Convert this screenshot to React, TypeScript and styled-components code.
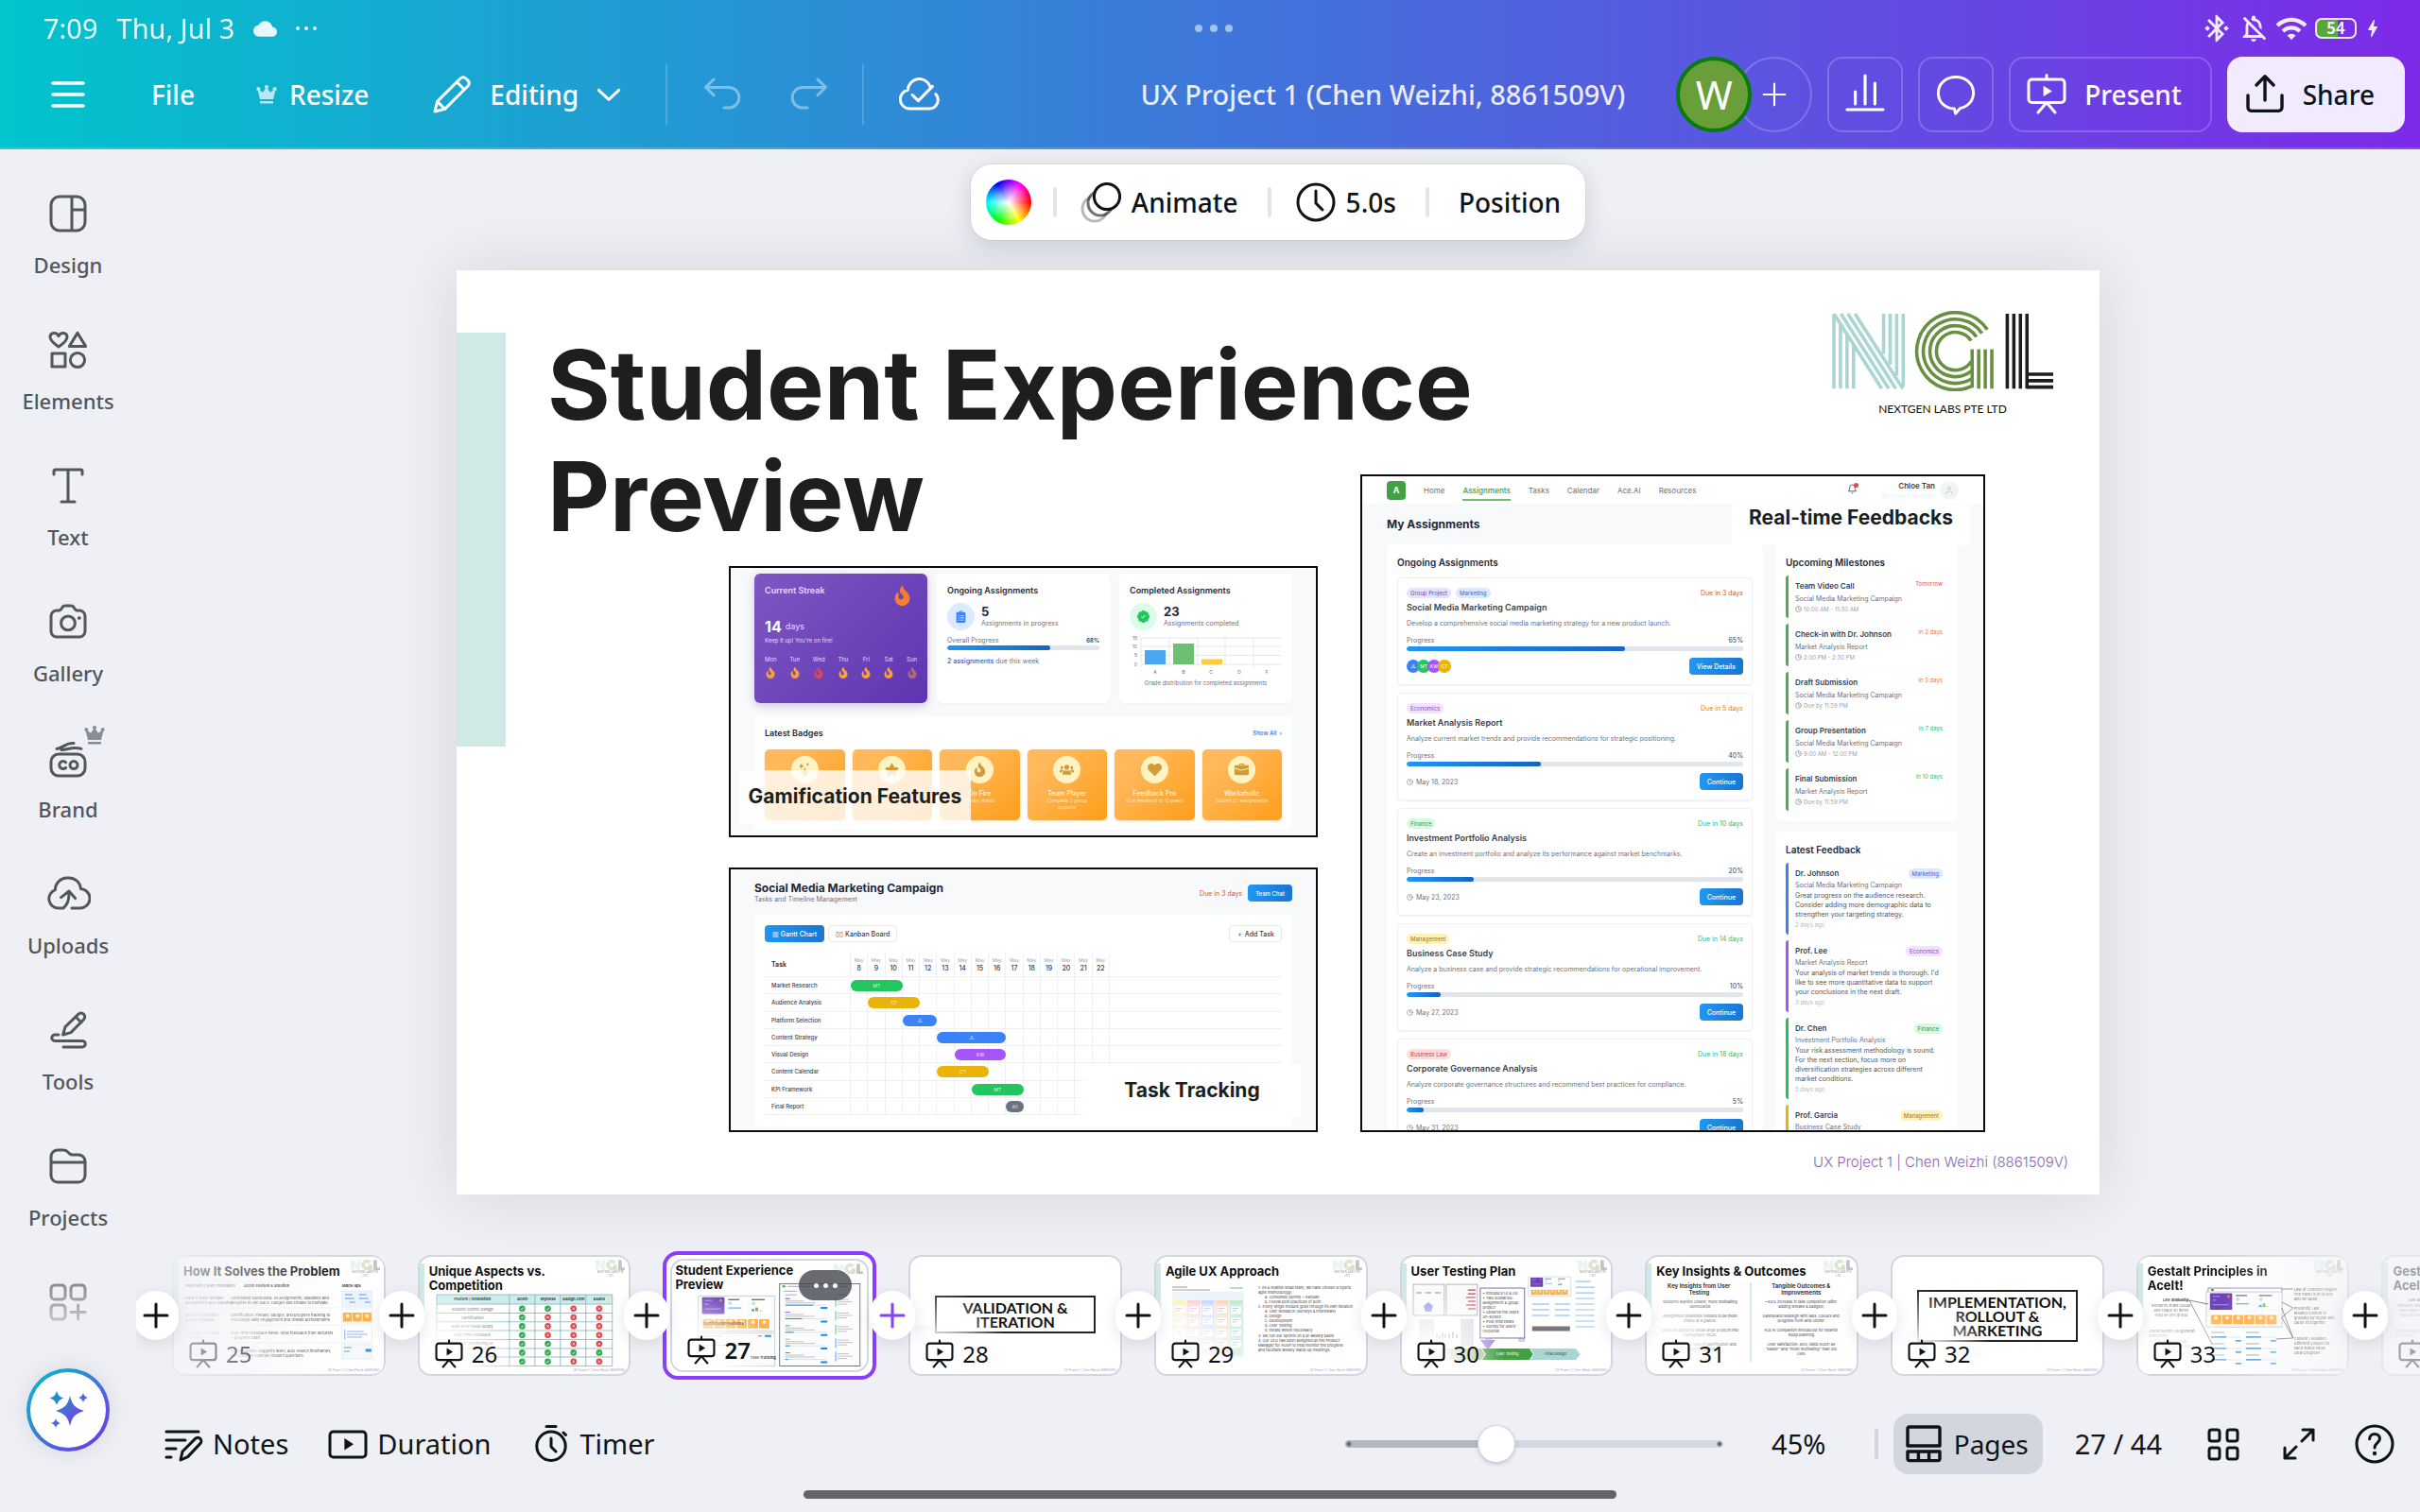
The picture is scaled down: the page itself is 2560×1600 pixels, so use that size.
import React, { useState } from "react";
import styled, { createGlobalStyle, css } from "styled-components";
import { MdBluetoothConnected, MdBolt, MdCloud, MdOutlineNotificationsOff, MdWifi } from "react-icons/md";
import { FaClipboardList, FaFire, FaHeart, FaStar, FaUsers } from "react-icons/fa";
import { BsBriefcaseFill, BsPatchCheckFill, BsStars } from "react-icons/bs";
import { FiBell, FiClock, FiUser } from "react-icons/fi";

const ui = `"Noto Sans", "Open Sans", sans-serif`;
const deck = `Inter, "Noto Sans", sans-serif`;

const GlobalStyle = createGlobalStyle`
  *, *::before, *::after { box-sizing: border-box; }
  body { margin: 0; background: #eff0f5; color: #0e1318; font-family: ${ui}; }
  button { font: inherit; color: inherit; background: none; border: 0; padding: 0; cursor: pointer; }
  h1, h2, h3, h4, p, ul, ol { margin: 0; padding: 0; }
`;

/* ---------- icons ---------- */

const Svg = styled.svg<{ $size?: number }>`
  width: ${(p) => p.$size ?? 48}px;
  height: ${(p) => p.$size ?? 48}px;
  flex: none;
  display: block;
  fill: none;
  stroke: currentColor;
  stroke-width: 1.5;
  stroke-linecap: round;
  stroke-linejoin: round;
`;

type IconName = keyof typeof shapes;

const shapes = {
  menu: <path strokeWidth="1.8" d="M4 6h16M4 12h16M4 18h16" />,
  crown: (
    <path
      fill="currentColor"
      stroke="none"
      d="M12 2a2 2 0 0 1 1.2 3.6l2.6 4.2 3.3-2.3a2 2 0 1 1 2.1.6L19 17H5L2.8 8.1a2 2 0 1 1 2.1-.6l3.3 2.3 2.6-4.2A2 2 0 0 1 12 2ZM5 19h14v2.5H5Z"
    />
  ),
  pencil: <path d="M3 21l1.3-5.3L16.6 3.4a1.9 1.9 0 0 1 2.7 0l1.3 1.3a1.9 1.9 0 0 1 0 2.7L8.3 19.7 3 21ZM14.600 5.400l4 4M4.300 15.700l4 4" />,
  chevron: <path strokeWidth="2.2" d="M4 8.500l8 7.500 8-7.500" />,
  undo: <path d="M7.500 4 3.300 8.200l4.200 4.200M3.600 8.200h11.900a5.400 5.400 0 0 1 0 10.800H13" />,
  redo: <path d="M16.500 4l4.200 4.200-4.200 4.200M20.400 8.200H8.500a5.400 5.400 0 0 0 0 10.800H11" />,
  cloudCheck: (
    <path d="M17.800 7.600a6 6 0 0 0-11.600 2A5 5 0 0 0 7 19.500h10.500a4.600 4.600 0 0 0 3.400-7.700M8.500 12.200l3.200 3.100 7.500-7.600" />
  ),
  plus: <path d="M12 4v16M4 12h16" />,
  chart: <path d="M2.500 20h19M6.800 17v-6.500M12 17V2M17.200 17V6" strokeWidth="1.600" />,
  comment: <path d="M12 2.800c5 0 9.300 3.300 9.300 8.300 0 4-2.600 7.200-7 8.200l-2.500 2.800-.6-2.600C6 19.300 2.700 15.900 2.700 11.100c0-5 4.300-8.300 9.300-8.300Z" />,
  present: (
    <>
      <path d="M4.300 4h15.400a1.800 1.800 0 0 1 1.800 1.800v8.700a1.800 1.800 0 0 1-1.800 1.800H4.300a1.800 1.800 0 0 1-1.800-1.800V5.800A1.800 1.800 0 0 1 4.300 4ZM12 1.800V4M12 16.300l-4.500 5.200M12 16.300l4.500 5.200" />
      <path d="M10.300 7.400v5.600l4.600-2.800Z" fill="currentColor" stroke="none" />
    </>
  ),
  share: <path strokeWidth="1.700" d="M3 12.500v6.200a2 2 0 0 0 2 2h14a2 2 0 0 0 2-2v-6.200M12 15V2.500M7.500 7 12 2.400 16.500 7" />,
  animate: (
    <>
      <circle cx="8.500" cy="15.500" r="6.500" opacity=".3" />
      <circle cx="11.500" cy="12.500" r="6.500" fill="#fff" opacity=".6" />
      <circle cx="15" cy="9" r="6.800" fill="#fff" />
    </>
  ),
  clock: <path d="M12 2.500a9.500 9.500 0 1 1 0 19 9.500 9.500 0 0 1 0-19ZM12 6v6.500l3.500 3.500" />,
  design: <path d="M7.500 3h9A4.500 4.500 0 0 1 21 7.500v9a4.500 4.500 0 0 1-4.500 4.500h-9A4.500 4.500 0 0 1 3 16.500v-9A4.500 4.500 0 0 1 7.500 3ZM14 3v18M14 10h7" />,
  elements: (
    <>
      <path d="M7.500 10.500C4.500 8.500 3 7 3 5.300 3 3 6.300 2.300 7.500 4.800 8.700 2.300 12 3 12 5.300c0 1.700-1.500 3.200-4.500 5.200Z" transform="translate(-.5)" />
      <path d="M17 3.200 21.300 10.200H12.700ZM3.500 14h7v7h-7Z" />
      <circle cx="17" cy="17.500" r="3.800" />
    </>
  ),
  text: <path d="M4.500 6V4.200c0-.5.300-.7.800-.7h13.400c.5 0 .8.200.8.700V6M12 3.500v17M8.500 20.500h7" />,
  camera: (
    <>
      <path d="M3 9a3 3 0 0 1 3-3h1.200c.8 0 1.100-.5 1.600-1.300C9.100 4 9.700 3.500 10.500 3.500h3c.8 0 1.400.5 1.700 1.200.5.800.8 1.300 1.600 1.300H18a3 3 0 0 1 3 3v8a3 3 0 0 1-3 3H6a3 3 0 0 1-3-3Z" />
      <circle cx="12" cy="12.700" r="3.700" />
      <path d="M17.800 10h.2" strokeWidth="1.800" />
    </>
  ),
  brand: (
    <>
      <path d="M7 10h10a4 4 0 0 1 4 4v3.500a4 4 0 0 1-4 4H7a4 4 0 0 1-4-4V14a4 4 0 0 1 4-4ZM6 7.200C10 6.700 11 3.600 15 4.300M8.500 7.800c3.500 0 5.500-2 10.500-.600" />
      <path d="M10.800 14.400a2 2 0 1 0 0 2.800" />
      <circle cx="15" cy="15.800" r="2" />
    </>
  ),
  upload: (
    <path d="M9.500 19.500H6.800a5 5 0 0 1-1.600-9.700A6.300 6.300 0 0 1 12 3.500a6.300 6.300 0 0 1 6.700 5.700 5 5 0 0 1-.7 10.300h-4M8.300 13.800l4.200-3.300 3.300 3.800M12.400 10.800c.3 3.500-.4 6.700-2.900 8.700" />
  ),
  tools: (
    <>
      <path d="M9.300 14.500l1.200-4.200 7-6.700a2 2 0 0 1 2.800 0 2 2 0 0 1 0 2.800l-6.800 6.900ZM16 5l3 3" />
      <path d="M7 14.500H5a1.600 1.600 0 0 0 0 3.200h14.500a1.600 1.600 0 0 1 0 3.300H9.500" />
    </>
  ),
  folder: (
    <path d="M3 7a3.500 3.500 0 0 1 3.500-3.500h3.200c1 0 1.700.4 2.300 1.100l.7.700c.5.500 1 .7 1.800.7h3A3.500 3.500 0 0 1 21 9.500V17a3.500 3.500 0 0 1-3.500 3.500h-11A3.500 3.500 0 0 1 3 17ZM3 10h18" />
  ),
  apps: (
    <path d="M5 3h4a2 2 0 0 1 1.500 2v4A2 2 0 0 1 9 10.500H5A2 2 0 0 1 3 9V5a2 2 0 0 1 2-2ZM15.500 3h4A2 2 0 0 1 21 5v4a2 2 0 0 1-1.500 1.500h-4A2 2 0 0 1 13.500 9V5a2 2 0 0 1 2-2ZM5 13.500h4a2 2 0 0 1 1.500 1.500v4A2 2 0 0 1 9 21H5a2 2 0 0 1-2-2v-4a2 2 0 0 1 2-1.500ZM17.300 13.500V21M13.500 17.300H21" />
  ),
  notes: (
    <>
      <path d="M3 5.500h17M3 10h10M3 14.500h5M3 19h2.500" />
      <path d="M10.500 20.500l1-4.500 6.800-6.800a1.800 1.800 0 0 1 2.600 2.600L14.300 18.800Z" />
    </>
  ),
  duration: (
    <>
      <rect x="2.500" y="5.500" width="19" height="13.500" rx="1.800" />
      <path d="M10.200 9v6.200l4.800-3.100Z" fill="currentColor" stroke="none" />
    </>
  ),
  timer: <path d="M12 5.500a7.600 7.600 0 1 1 0 15.200 7.600 7.600 0 0 1 0-15.200ZM12 9v4.500l2.500 2.500M9.500 2.800h5M18.500 6l1.200 1.200" />,
  pages: <path d="M4.500 3h15a1 1 0 0 1 1 1v9h-17V4a1 1 0 0 1 1-1ZM3.500 16h17v3.800a1 1 0 0 1-1 1h-15a1 1 0 0 1-1-1ZM9.200 16v4.800M14.800 16v4.800" strokeWidth="1.700" />,
  grid: (
    <>
      <rect x="4.500" y="4.500" width="5.500" height="6" rx="1.200" />
      <rect x="14" y="4.500" width="5.500" height="6" rx="1.200" />
      <rect x="4.500" y="14" width="5.500" height="6" rx="1.200" />
      <rect x="14" y="14" width="5.500" height="6" rx="1.200" />
    </>
  ),
  expand: <path d="M14 4.500h5.500V10M19.500 4.500l-6 6M10 19.500H4.500V14M4.500 19.500l6-6" />,
  help: (
    <>
      <circle cx="12" cy="12" r="9.500" />
      <path d="M9.300 9.400c0-3.600 5.400-3.500 5.400-.2 0 2.200-2.700 2.300-2.700 4.800" />
      <path d="M12 17h.01" strokeWidth="2.200" />
    </>
  ),
};

const Icon = ({ name, size }: { name: IconName; size?: number }) => (
  <Svg viewBox="0 0 24 24" $size={size} aria-hidden="true">
    {shapes[name]}
  </Svg>
);

/* ---------- header ---------- */

const Header = styled.header`
  background: linear-gradient(90deg, #00c4cc, #7d2ae8);
  border-bottom: 2px solid rgba(255, 255, 255, 0.16);
  background-clip: border-box;
  background-origin: border-box;
  color: #fff;
`;

const StatusBar = styled.div`
  display: grid;
  grid-template-columns: 1fr auto 1fr;
  align-items: center;
  height: 60px;
  padding: 0 38px 0 46px;
  font: 400 29px/36px ${ui};
  opacity: 0.9;
`;

const StatusGroup = styled.div<{ $end?: boolean; $gap: number }>`
  display: flex;
  align-items: center;
  gap: ${(p) => p.$gap}px;
  justify-content: ${(p) => (p.$end ? "flex-end" : "flex-start")};
`;

const Dots = styled.span<{ $size: number; $gap: number; $color?: string }>`
  display: flex;
  gap: ${(p) => p.$gap}px;
  &::before,
  &::after,
  i {
    content: "";
    width: ${(p) => p.$size}px;
    height: ${(p) => p.$size}px;
    border-radius: 50%;
    background: ${(p) => p.$color ?? "#fff"};
  }
`;

const Battery = styled.span`
  width: 44px;
  height: 22px;
  margin-left: 2px;
  border: 2px solid #fff;
  border-radius: 7px;
  background: linear-gradient(90deg, #52b627 54%, transparent 54%);
  font: 700 17px/18px ${ui};
  text-align: center;
`;

const Toolbar = styled.nav`
  display: flex;
  align-items: center;
  height: 96px;
  padding: 0 16px 16px 48px;
  font: 500 28px/40px ${ui};
`;

const MenuButton = styled.button`
  margin-right: 32px;
`;

const NavButton = styled.button<{ $gap?: number }>`
  display: flex;
  align-items: center;
  gap: ${(p) => p.$gap ?? 12}px;
  height: 80px;
  padding: 0 32px;
`;

const Faded = styled.span<{ $opacity: number }>`
  opacity: ${(p) => p.$opacity};
`;

const Rule = styled.span`
  width: 2px;
  height: 64px;
  margin: 0 34px 0 12px;
  background: rgba(255, 255, 255, 0.18);
`;

const History = styled.div`
  display: flex;
  gap: 44px;
  margin-right: 20px;
  opacity: 0.4;
`;

const DocTitle = styled.h1`
  margin-left: auto;
  font: 500 29px/40px ${ui};
  color: rgba(255, 255, 255, 0.88);
`;

const Actions = styled.div`
  display: flex;
  gap: 16px;
  margin-left: 54px;
`;

const People = styled.div`
  display: flex;
`;

const Avatar = styled.button`
  position: relative;
  width: 80px;
  height: 80px;
  border: 4px solid #0a7a0c;
  border-radius: 50%;
  background: #689f38;
  font: 400 42px/72px ${ui};
`;

const OutlineButton = styled.button<{ $round?: boolean; $wide?: boolean }>`
  display: flex;
  align-items: center;
  justify-content: center;
  gap: 16px;
  min-width: 80px;
  height: 80px;
  padding: ${(p) => (p.$wide ? "0 30px 0 14px" : "0")};
  margin-left: ${(p) => (p.$round ? "-16px" : "0")};
  border: 2px solid rgba(255, 255, 255, 0.2);
  border-radius: ${(p) => (p.$round ? "50%" : "16px")};
`;

const ShareButton = styled.button`
  display: flex;
  align-items: center;
  gap: 16px;
  height: 80px;
  padding: 0 32px 0 16px;
  border-radius: 16px;
  background: #f2ebfe;
  color: #0e1318;
`;

/* ---------- body ---------- */

const Body = styled.div`
  display: grid;
  grid-template-columns: 144px minmax(0, 1fr);
`;

const Sidebar = styled.aside`
  display: flex;
  flex-direction: column;
  align-items: center;
  gap: 48px;
  padding-top: 44px;
  color: #53565b;
`;

const SideButton = styled.button<{ $fade?: boolean }>`
  position: relative;
  display: flex;
  flex-direction: column;
  align-items: center;
  gap: 14px;
  width: 144px;
  padding-bottom: ${(p) => (p.$fade ? 0 : 2)}px;
  font: 500 22px/32px ${ui};
  ${(p) =>
    p.$fade &&
    css`
      margin-bottom: -2px;
      -webkit-mask-image: linear-gradient(rgba(0, 0, 0, 0.7), rgba(0, 0, 0, 0.25));
      mask-image: linear-gradient(rgba(0, 0, 0, 0.7), rgba(0, 0, 0, 0.25));
    `}
`;

const ProMark = styled.span`
  position: absolute;
  top: -12px;
  left: 88px;
  color: #878e99;
`;

const MagicButton = styled.button`
  display: grid;
  place-items: center;
  width: 88px;
  height: 88px;
  border: 4px solid transparent;
  border-radius: 50%;
  background: linear-gradient(#fff, #fff) padding-box, linear-gradient(135deg, #00c4cc, #7d2ae8) border-box;
  box-shadow: 0 0 24px rgba(64, 87, 109, 0.15);
`;

const Main = styled.main`
  display: flex;
  flex-direction: column;
  padding-top: 16px;
  min-width: 0;
`;

const ContextBar = styled.div`
  position: relative;
  z-index: 2;
  display: flex;
  align-items: center;
  align-self: center;
  height: 80px;
  padding: 0 24px 0 16px;
  border-radius: 22px;
  background: #fff;
  box-shadow: 0 0 0 1px rgba(64, 87, 109, 0.07), 0 6px 24px rgba(53, 71, 90, 0.2);
  font: 500 28px/40px ${ui};
`;

const ColorWheel = styled.button`
  width: 48px;
  height: 48px;
  border-radius: 50%;
  background: radial-gradient(#fff, rgba(255, 255, 255, 0) 65%),
    conic-gradient(from 90deg, red, yellow, lime, cyan, blue, magenta, red);
`;

const ContextRule = styled.span`
  width: 4px;
  height: 32px;
  margin: 0 23px;
  border-radius: 2px;
  background: #e1e4e9;
`;

const ContextButton = styled.button`
  display: flex;
  align-items: center;
  gap: 8px;
  height: 64px;
  padding: 0 8px 0 0;
  &:last-child {
    padding: 0 2px 0 8px;
  }
`;

const Stage = styled.section`
  display: flex;
  justify-content: center;
  padding: 32px 0 60px;
`;

const Slide = styled.article`
  position: relative;
  flex: none;
  width: 1738px;
  aspect-ratio: 1738 / 978;
  background: #fff;
  box-shadow: 0 0 60px rgba(64, 72, 90, 0.16);
  font-family: ${deck};
  color: #1d1f1f;
`;

const Accent = styled.div`
  position: absolute;
  left: 0;
  top: 66px;
  width: 52px;
  height: 438px;
  background: #cfe9e6;
`;

const SlideTitle = styled.h2`
  position: absolute;
  left: 96px;
  top: 62px;
  width: 1100px;
  font: 700 102px/118px ${deck};
`;

const SlideLogo = styled.div`
  position: absolute;
  left: 1453px;
  top: 43px;
  width: 236px;
  padding-left: 2px;
  text-align: center;
  font: 400 12px/16px Lato, sans-serif;
  color: #111;
  svg {
    display: block;
    margin-bottom: 11px;
  }
`;

const SlideFooter = styled.p`
  position: absolute;
  right: 33px;
  bottom: 22px;
  font: 300 15px/24px ${deck};
  color: #8667b0;
`;

const LogoSvg = styled.svg`
  width: 100%;
  display: block;
  fill: none;
  stroke-width: 3.6;
`;

const rings = [41.2, 34.2, 27.2, 20.2];
const ring = (r: number) => {
  const a = (-34 * Math.PI) / 180;
  const dy = Math.sqrt(r * r - 17 * 17);
  return `M${131.6 + r * Math.cos(a)} ${43 + r * Math.sin(a)}A${r} ${r} 0 1 0 ${131.6 + 17} ${43 + dy}`;
};

const Logo = () => (
  <LogoSvg viewBox="0 0 236 86" role="img" aria-label="NGL">
    <g stroke="#a9d5d2">
      {[0, 1, 2, 3].map((k) => (
        <path key={k} d={`M${2 + 7 * k} ${k ? 4 + 11 * k : 3}V83M${55 + 7 * k} 3V${46 + 11.5 * k}M${2 + 7.5 * k} 3L${53 + 7.5 * k} 83`} />
      ))}
    </g>
    <g stroke="#688f42">
      {rings.map((r) => (
        <path key={r} d={ring(r)} />
      ))}
      {[0, 1, 2, 3].map((k) => (
        <path key={k} d={`M${149.5 + 7 * k} 41V${k ? 83 : 82}`} />
      ))}
    </g>
    <g stroke="#1d1f1f">
      {[0, 1, 2, 3].map((k) => (
        <path key={k} d={`M${187 + 7 * k} 3V83`} />
      ))}
      <path d="M208 67.500H236M208 74.500H236M208 81.300H236" />
    </g>
  </LogoSvg>
);

/* ---------- pictures placed on the slide ---------- */

const Shot = styled.figure<{ $x: number; $y: number; $w: number; $h: number }>`
  position: absolute;
  left: ${(p) => p.$x}px;
  top: ${(p) => p.$y}px;
  width: ${(p) => p.$w}px;
  height: ${(p) => p.$h}px;
  margin: 0;
  border: 2px solid #0a0a0a;
  background: #f7f9fb;
  overflow: hidden;
  font: 400 6px/9px ${deck};
  color: #6b7280;
`;

const Caption = styled.figcaption<{ $x: number; $y: number; $w: number; $h: number; $veil: number; $top?: boolean }>`
  position: absolute;
  left: ${(p) => p.$x}px;
  top: ${(p) => p.$y}px;
  width: ${(p) => p.$w}px;
  height: ${(p) => p.$h}px;
  display: flex;
  justify-content: center;
  align-items: ${(p) => (p.$top ? "flex-start" : "center")};
  background: rgba(255, 255, 255, ${(p) => p.$veil});
  font: 700 21px/28px ${deck};
  color: #1d1f1f;
  white-space: nowrap;
`;

const Row = styled.div<{ $gap?: number; $between?: boolean; $top?: boolean; $pad?: number }>`
  display: flex;
  align-items: ${(p) => (p.$top ? "flex-start" : "center")};
  justify-content: ${(p) => (p.$between ? "space-between" : "flex-start")};
  gap: ${(p) => p.$gap ?? 0}px;
  padding: 0 ${(p) => p.$pad ?? 0}px;
`;

const Words = styled.span<{ $size?: number; $line?: number; $weight?: number; $color?: string; $center?: boolean }>`
  display: block;
  font-size: ${(p) => p.$size ?? 6}px;
  line-height: ${(p) => p.$line ?? 9}px;
  font-weight: ${(p) => p.$weight ?? 400};
  color: ${(p) => p.$color ?? "inherit"};
  text-align: ${(p) => (p.$center ? "center" : "inherit")};
  white-space: pre-line;
`;

const Em = styled.b`
  color: #3f6fe0;
  font-weight: 600;
`;

const Dashboard = styled.div`
  display: grid;
  gap: 14px;
  padding: 6px 25px;
`;

const Cards = styled.div`
  display: grid;
  grid-template-columns: repeat(3, 1fr);
  gap: 10px;
`;

const Card = styled.div<{ $purple?: boolean }>`
  height: 137px;
  padding: 11px;
  border-radius: 6px;
  background: ${(p) => (p.$purple ? "linear-gradient(135deg, #7e57c2, #5e35b1)" : "#fff")};
  box-shadow: ${(p) => (p.$purple ? "0 3px 8px rgba(94, 53, 177, 0.25)" : "0 1px 2px rgba(0, 0, 0, 0.04)")};
  color: ${(p) => (p.$purple ? "#e6dcf7" : "inherit")};
`;

const StreakTop = styled.div`
  display: flex;
  justify-content: space-between;
  height: 36px;
  svg {
    width: 19px;
    height: 21px;
    margin: 2px 6px 0 0;
    color: #fb7d2b;
  }
`;

const Week = styled.div`
  display: flex;
  justify-content: space-between;
  margin-top: 9px;
  text-align: center;
  svg {
    width: 10px;
    height: 12px;
    margin-top: 4px;
    color: #f6a13c;
  }
  div:nth-child(3) svg {
    color: #e2464f;
  }
  div:last-child svg {
    opacity: 0.5;
  }
`;

const Disc = styled.span<{ $bg: string; $color: string; $size?: number }>`
  display: grid;
  place-items: center;
  width: ${(p) => p.$size ?? 29}px;
  height: ${(p) => p.$size ?? 29}px;
  border-radius: 50%;
  background: ${(p) => p.$bg};
  color: ${(p) => p.$color};
  font-size: 13px;
`;

const Meter = styled.div`
  height: 5px;
  border-radius: 3px;
  background: #e2e5ea;
  overflow: hidden;
  div {
    height: 100%;
    border-radius: 3px;
    background: linear-gradient(90deg, #2196f3, #1565c0);
  }
`;

const Stat = styled.div`
  display: flex;
  align-items: center;
  gap: 7px;
  margin: 6px 0 5px;
`;

const GradeSvg = styled.svg`
  display: block;
  width: 160px;
  height: 44px;
  font: 5px ${deck};
  fill: #6b7280;
`;

const Panel = styled.div`
  height: 120px;
  padding: 11px;
  border-radius: 6px;
  background: #fff;
`;

const Badges = styled.div`
  display: grid;
  grid-template-columns: repeat(6, 1fr);
  gap: 8px;
  margin-top: 11px;
`;

const Badge = styled.div`
  display: flex;
  flex-direction: column;
  align-items: center;
  height: 75px;
  padding-top: 7px;
  border-radius: 5px;
  background: linear-gradient(135deg, #ffb95c 20%, #ff9e1b);
  box-shadow: 0 1px 3px rgba(255, 152, 0, 0.35);
  text-align: center;
  ${Disc} {
    margin-bottom: 6px;
    font-size: 15px;
  }
`;

const badges = [
  { icon: <BsStars />, title: "Early Bird", text: "Submit assignments\nearly" },
  { icon: <FaStar />, title: "Perfect Score", text: "Get 100% on an\nassignment" },
  { icon: <FaFire />, title: "On Fire", text: "10-day streak" },
  { icon: <FaUsers />, title: "Team Player", text: "Complete 3 group\nprojects" },
  { icon: <FaHeart />, title: "Feedback Pro", text: "Give feedback to 10 peers" },
  { icon: <BsBriefcaseFill />, title: "Workaholic", text: "Submit 20 assignments" },
];

const GamificationShot = () => (
  <Shot $x={288} $y={313} $w={623} $h={287}>
    <Dashboard>
      <Cards>
        <Card $purple>
          <StreakTop>
            <Words $size={9} $line={13} $weight={600}>Current Streak</Words>
            <FaFire />
          </StreakTop>
          <Row $gap={4}>
            <Words $size={16} $line={18} $weight={700} $color="#fff">14</Words>
            <Words $size={9} $line={14}>days</Words>
          </Row>
          <Words $line={12}>Keep it up! You're on fire!</Words>
          <Week>
            {["Mon", "Tue", "Wed", "Thu", "Fri", "Sat", "Sun"].map((d) => (
              <div key={d}>
                <Words>{d}</Words>
                <FaFire />
              </div>
            ))}
          </Week>
        </Card>
        <Card>
          <Words $size={9} $line={14} $weight={600} $color="#1f2937">Ongoing Assignments</Words>
          <Stat>
            <Disc $bg="#dbeafe" $color="#3b82f6"><FaClipboardList /></Disc>
            <div>
              <Words $size={13} $line={15} $weight={700} $color="#1f2937">5</Words>
              <Words $size={7} $line={10}>Assignments in progress</Words>
            </div>
          </Stat>
          <Row $between>
            <Words $size={7} $line={11}>Overall Progress</Words>
            <Words $line={11} $weight={600} $color="#333">68%</Words>
          </Row>
          <Meter><div style={{ width: "68%" }} /></Meter>
          <Words $size={7} $line={24}>
            <Em>2 assignments</Em> due this week
          </Words>
        </Card>
        <Card>
          <Words $size={9} $line={14} $weight={600} $color="#1f2937">Completed Assignments</Words>
          <Stat>
            <Disc $bg="#dcfce7" $color="#22c55e"><BsPatchCheckFill /></Disc>
            <div>
              <Words $size={13} $line={15} $weight={700} $color="#1f2937">23</Words>
              <Words $size={7} $line={10}>Assignments completed</Words>
            </div>
          </Stat>
          <GradeSvg viewBox="0 0 160 44">
            <path d="M12 3H160M12 12H160M12 21.500H160M12 31H160M12 3V34M42 3V34M72 3V34M101 3V34M131 3V34" stroke="#e5e7eb" strokeWidth="1" />
            <rect x="16" y="16" width="22" height="15" fill="#4ba6f0" />
            <rect x="46" y="9" width="22" height="22" fill="#6fbf73" />
            <rect x="76" y="25.500" width="22" height="5.500" fill="#fdcb3f" />
            <g textAnchor="end">
              <text x="8" y="5">15</text>
              <text x="8" y="14">10</text>
              <text x="8" y="23">5</text>
              <text x="8" y="33">0</text>
            </g>
            <g textAnchor="middle">
              <text x="27" y="41">A</text>
              <text x="57" y="41">B</text>
              <text x="86" y="41">C</text>
              <text x="116" y="41">D</text>
              <text x="145" y="41">F</text>
            </g>
          </GradeSvg>
          <Words $line={14} $center>Grade distribution for completed assignments</Words>
        </Card>
      </Cards>
      <Panel>
        <Row $between>
          <Words $size={9} $line={13} $weight={600} $color="#1f2937">Latest Badges</Words>
          <Words $weight={600} $color="#4f7fe6">Show All &nbsp;›</Words>
        </Row>
        <Badges>
          {badges.map((b) => (
            <Badge key={b.title}>
              <Disc $bg="#fff3c4" $color="#cf9c39">{b.icon}</Disc>
              <Words $size={7} $line={9} $weight={500} $color="#fff1dc">{b.title}</Words>
              <Words $size={5} $line={7} $color="#ffe4bd">{b.text}</Words>
            </Badge>
          ))}
        </Badges>
      </Panel>
    </Dashboard>
    <Caption $x={9} $y={214} $w={245} $h={56} $veil={0.8}>Gamification Features</Caption>
  </Shot>
);

const Planner = styled.div`
  padding: 13px 25px 0;
`;

const Pill = styled.span<{ $kind?: "line"; $size?: number }>`
  display: inline-flex;
  align-items: center;
  justify-content: center;
  gap: 3px;
  height: 18px;
  padding: 0 7px;
  border-radius: 4px;
  font-size: ${(p) => p.$size ?? 6}px;
  font-weight: 500;
  white-space: nowrap;
  border: 1px solid ${(p) => (p.$kind === "line" ? "#e5e7eb" : "transparent")};
  background: ${(p) => (p.$kind === "line" ? "#fff" : "linear-gradient(90deg, #2196f3, #1976d2) border-box")};
  color: ${(p) => (p.$kind === "line" ? "#374151" : "#fff")};
`;

const PlanCard = styled.div`
  margin-top: 11px;
  height: 224px;
  padding: 11px 11px 0;
  border-radius: 6px;
  background: #fff;
`;

const Gantt = styled.div`
  position: relative;
  display: grid;
  grid-template-columns: 91px repeat(15, 1fr) 182px;
  grid-template-rows: 27px repeat(8, 1fr);
  height: 173px;
  margin-top: 10px;
`;

const GanttCell = styled.div<{ $row: number; $col: number; $head?: boolean }>`
  grid-row: ${(p) => p.$row};
  grid-column: ${(p) => p.$col};
  display: flex;
  flex-direction: column;
  justify-content: center;
  border-bottom: 1px solid #eef0f3;
  border-right: ${(p) => (p.$col < 17 ? "1px solid #eef0f3" : "0")};
  padding-left: ${(p) => (p.$col === 1 ? "7px" : "0")};
  text-align: ${(p) => (p.$head ? "center" : "left")};
`;

const GanttBar = styled.div<{ $row: number; $from: number; $days: number; $color: string }>`
  grid-row: ${(p) => p.$row};
  grid-column: ${(p) => p.$from + 2} / span ${(p) => p.$days};
  align-self: center;
  height: 12px;
  border-radius: 6px;
  background: ${(p) => p.$color};
  color: rgba(255, 255, 255, 0.85);
  font-size: 5px;
  line-height: 12px;
  text-align: center;
`;

const tasks = [
  { name: "Market Research", who: "MT", from: 0, days: 3, color: "#22c55e" },
  { name: "Audience Analysis", who: "CT", from: 1, days: 3, color: "#eab308" },
  { name: "Platform Selection", who: "JL", from: 3, days: 2, color: "#3b82f6" },
  { name: "Content Strategy", who: "JL", from: 5, days: 4, color: "#3b82f6" },
  { name: "Visual Design", who: "KW", from: 6, days: 3, color: "#a855f7" },
  { name: "Content Calendar", who: "CT", from: 5, days: 3, color: "#eab308" },
  { name: "KPI Framework", who: "MT", from: 7, days: 3, color: "#22c55e" },
  { name: "Final Report", who: "All", from: 9, days: 1, color: "#6b7280" },
];
const dates = Array.from({ length: 15 }, (_, i) => 8 + i);

const TaskShot = () => (
  <Shot $x={288} $y={632} $w={623} $h={280}>
    <Planner>
      <Row $between>
        <div>
          <Words $size={12} $line={13} $weight={700} $color="#1f2937">Social Media Marketing Campaign</Words>
          <Words $size={7} $line={11}>Tasks and Timeline Management</Words>
        </div>
        <Row $gap={6}>
          <Words $size={7} $color="#ef4444">Due in 3 days</Words>
          <Pill>Team Chat</Pill>
        </Row>
      </Row>
      <PlanCard>
        <Row $between>
          <Row $gap={4}>
            <Pill $size={7}>▥ Gantt Chart</Pill>
            <Pill $size={7} $kind="line">▯▯ Kanban Board</Pill>
          </Row>
          <Pill $size={7} $kind="line">＋ Add Task</Pill>
        </Row>
        <Gantt>
          <GanttCell $row={1} $col={1}>
            <Words $size={7} $weight={600} $color="#1f2937">Task</Words>
          </GanttCell>
          {dates.map((d, i) => (
            <GanttCell key={d} $row={1} $col={i + 2} $head>
              <Words $size={5} $line={8} $color="#9ca3af">May</Words>
              <Words $size={7} $line={9} $weight={500} $color="#374151">{d}</Words>
            </GanttCell>
          ))}
          <GanttCell $row={1} $col={17} />
          {tasks.map((t, r) => (
            <React.Fragment key={t.name}>
              <GanttCell $row={r + 2} $col={1}>
                <Words $weight={500} $color="#374151">{t.name}</Words>
              </GanttCell>
              {dates.map((d, i) => (
                <GanttCell key={d} $row={r + 2} $col={i + 2} />
              ))}
              <GanttCell $row={r + 2} $col={17} />
              <GanttBar $row={r + 2} $from={t.from} $days={t.days} $color={t.color}>{t.who}</GanttBar>
            </React.Fragment>
          ))}
        </Gantt>
      </PlanCard>
    </Planner>
    <Caption $x={373} $y={206} $w={230} $h={56} $veil={0.9}>Task Tracking</Caption>
  </Shot>
);

const AppNav = styled.div`
  display: flex;
  align-items: center;
  gap: 19px;
  height: 29px;
  padding: 0 26px;
  background: #fff;
  white-space: nowrap;
`;

const AppMark = styled.span`
  width: 20px;
  height: 20px;
  border-radius: 4px;
  background: #43a047;
  color: #fff;
  font: 700 9px/20px ${deck};
  text-align: center;
`;

const NavWord = styled.span<{ $active?: boolean }>`
  font-size: 8px;
  line-height: 17px;
  padding-top: 2px;
  font-weight: ${(p) => (p.$active ? 600 : 400)};
  color: ${(p) => (p.$active ? "#4caf50" : "#6b7280")};
  box-shadow: ${(p) => (p.$active ? "0 2px 0 #6cbf70" : "none")};
`;

const NavUser = styled.div`
  display: flex;
  align-items: center;
  gap: 5px;
  margin-left: auto;
  text-align: right;
`;

const Alert = styled.span`
  position: relative;
  margin-right: 21px;
  color: #4b5563;
  font-size: 11px;
  line-height: 11px;
  &::after {
    content: "";
    position: absolute;
    top: -1px;
    right: -1px;
    width: 5px;
    height: 5px;
    border-radius: 50%;
    background: #ef4444;
  }
`;

const Columns = styled.div`
  display: grid;
  grid-template-columns: 398px 193px;
  gap: 13px;
  align-items: start;
  padding: 0 26px;
`;

const Box = styled.div<{ $gap: number }>`
  display: grid;
  gap: ${(p) => p.$gap}px;
  padding: 11px 11px;
  border-radius: 6px;
  background: #fff;
`;

const BoxTitle = styled.h3`
  font: 600 10px/16px ${deck};
  color: #1f2937;
`;

const Assignment = styled.div`
  height: 114px;
  padding: 10px 9px;
  border: 1px solid #f0f1f3;
  border-radius: 4px;
  box-shadow: 0 1px 2px rgba(0, 0, 0, 0.06);
`;

const Tag = styled.span<{ $bg: string; $color: string }>`
  padding: 0 4px;
  border-radius: 6px;
  background: ${(p) => p.$bg};
  color: ${(p) => p.$color};
  font-size: 6px;
  line-height: 11px;
`;

const Face = styled.span<{ $bg: string }>`
  width: 14px;
  height: 14px;
  margin-right: -3px;
  border-radius: 50%;
  background: ${(p) => p.$bg};
  color: #fff;
  font-size: 5px;
  line-height: 14px;
  text-align: center;
`;

const tagColors: Record<string, [string, string]> = {
  "Group Project": ["#e6e3fd", "#5b4bc4"],
  Marketing: ["#dbe8fe", "#3a66c8"],
  Economics: ["#f1e3fd", "#8c46c8"],
  Finance: ["#d8f8e2", "#3c8d57"],
  Management: ["#fdf3b8", "#9a7420"],
  "Business Law": ["#fddede", "#c24545"],
};

const assignments = [
  { tags: ["Group Project", "Marketing"], due: "Due in 3 days", tone: "#ef4444", name: "Social Media Marketing Campaign", text: "Develop a comprehensive social media marketing strategy for a new product launch.", done: 65, date: "" },
  { tags: ["Economics"], due: "Due in 5 days", tone: "#f97316", name: "Market Analysis Report", text: "Analyze current market trends and provide recommendations for strategic positioning.", done: 40, date: "May 18, 2023" },
  { tags: ["Finance"], due: "Due in 10 days", tone: "#22c55e", name: "Investment Portfolio Analysis", text: "Create an investment portfolio and analyze its performance against market benchmarks.", done: 20, date: "May 23, 2023" },
  { tags: ["Management"], due: "Due in 14 days", tone: "#22c55e", name: "Business Case Study", text: "Analyze a business case and provide strategic recommendations for operational improvement.", done: 10, date: "May 27, 2023" },
  { tags: ["Business Law"], due: "Due in 18 days", tone: "#22c55e", name: "Corporate Governance Analysis", text: "Analyze corporate governance structures and recommend best practices for compliance.", done: 5, date: "May 31, 2023" },
];

const faces: [string, string][] = [["JL", "#3b82f6"], ["MT", "#22c55e"], ["KW", "#a855f7"], ["CT", "#eab308"]];

const Note = styled.div<{ $edge: string; $h: number }>`
  min-height: ${(p) => p.$h}px;
  padding: 4px 5px 5px 7px;
  border-left: 3px solid ${(p) => p.$edge};
  border-radius: 3px;
  box-shadow: 0 0 2px rgba(0, 0, 0, 0.06);
`;

const milestones = [
  { name: "Team Video Call", due: "Tomorrow", tone: "#ef4444", sub: "Social Media Marketing Campaign", time: "10:00 AM - 11:30 AM" },
  { name: "Check-in with Dr. Johnson", due: "in 2 days", tone: "#f97316", sub: "Market Analysis Report", time: "2:00 PM - 2:30 PM" },
  { name: "Draft Submission", due: "in 3 days", tone: "#f97316", sub: "Social Media Marketing Campaign", time: "Due by 11:59 PM" },
  { name: "Group Presentation", due: "in 7 days", tone: "#22c55e", sub: "Social Media Marketing Campaign", time: "9:00 AM - 12:00 PM" },
  { name: "Final Submission", due: "in 10 days", tone: "#22c55e", sub: "Market Analysis Report", time: "Due by 11:59 PM" },
];

const feedback = [
  { name: "Dr. Johnson", tag: "Marketing", edge: "#3b82f6", sub: "Social Media Marketing Campaign", text: "Great progress on the audience research.\nConsider adding more demographic data to\nstrengthen your targeting strategy.", ago: "2 days ago" },
  { name: "Prof. Lee", tag: "Economics", edge: "#a855f7", sub: "Market Analysis Report", text: "Your analysis of market trends is thorough. I'd\nlike to see more quantitative data to support\nyour conclusions in the next draft.", ago: "3 days ago" },
  { name: "Dr. Chen", tag: "Finance", edge: "#22c55e", sub: "Investment Portfolio Analysis", text: "Your risk assessment methodology is sound.\nFor the next section, focus more on\ndiversification strategies across different\nmarket conditions.", ago: "5 days ago" },
  { name: "Prof. Garcia", tag: "Management", edge: "#eab308", sub: "Business Case Study", text: "", ago: "" },
];

const Spacer = styled.div<{ $h: number }>`
  height: ${(p) => p.$h}px;
`;

const AssignmentsShot = () => (
  <Shot $x={956} $y={216} $w={661} $h={696}>
    <AppNav>
      <AppMark>A</AppMark>
      {["Home", "Assignments", "Tasks", "Calendar", "Ace.AI", "Resources"].map((w) => (
        <NavWord key={w} $active={w === "Assignments"}>{w}</NavWord>
      ))}
      <NavUser>
        <Alert><FiBell /></Alert>
        <div>
          <Words $size={8} $line={11} $weight={600} $color="#374151">Chloe Tan</Words>
          <Words $size={7} $line={9} $color="#eff0f2">Business Studies</Words>
        </div>
        <Disc $bg="#f3f4f6" $color="#c4c8ce" $size={20}><FiUser size={10} /></Disc>
      </NavUser>
    </AppNav>
    <Row $pad={26}>
      <Words $size={12} $line={43} $weight={700} $color="#1f2937">My Assignments</Words>
    </Row>
    <Columns>
      <Box $gap={8}>
        <BoxTitle>Ongoing Assignments</BoxTitle>
        {assignments.map((a) => (
          <Assignment key={a.name}>
            <Row $between>
              <Row $gap={5}>
                {a.tags.map((t) => (
                  <Tag key={t} $bg={tagColors[t][0]} $color={tagColors[t][1]}>{t}</Tag>
                ))}
              </Row>
              <Words $size={7} $color={a.tone}>{a.due}</Words>
            </Row>
            <Spacer $h={3} />
            <Words $size={9} $line={14} $weight={600} $color="#374151">{a.name}</Words>
            <Spacer $h={4} />
            <Words $size={7} $line={12}>{a.text}</Words>
            <Spacer $h={7} />
            <Row $between>
              <Words $size={7} $line={10}>Progress</Words>
              <Words $size={7} $line={10} $color="#374151">{a.done}%</Words>
            </Row>
            <Spacer $h={1} />
            <Meter><div style={{ width: `${a.done}%` }} /></Meter>
            <Spacer $h={7} />
            <Row $between>
              {a.date ? (
                <Row $gap={3}>
                  <FiClock size={7} />
                  <Words $size={7}>{a.date}</Words>
                </Row>
              ) : (
                <Row>
                  {faces.map(([n, c]) => (
                    <Face key={n} $bg={c}>{n}</Face>
                  ))}
                </Row>
              )}
              <Pill $size={7}>{a.date ? "Continue" : "View Details"}</Pill>
            </Row>
          </Assignment>
        ))}
      </Box>
      <div>
        <Box $gap={6}>
          <BoxTitle>Upcoming Milestones</BoxTitle>
          {milestones.map((m) => (
            <Note key={m.name} $edge="#4caf50" $h={45}>
              <Row $between $top>
                <Words $size={8} $line={14} $weight={600} $color="#374151">{m.name}</Words>
                <Words $line={9} $color={m.tone}>{m.due}</Words>
              </Row>
              <Words $size={7} $line={13}>{m.sub}</Words>
              <Row $gap={2}>
                <FiClock size={7} />
                <Words $color="#9ca3af">{m.time}</Words>
              </Row>
            </Note>
          ))}
        </Box>
        <Spacer $h={11} />
        <Box $gap={6}>
          <BoxTitle>Latest Feedback</BoxTitle>
          {feedback.map((f) => (
            <Note key={f.name} $edge={f.edge} $h={75}>
              <Row $between>
                <Words $size={8} $line={14} $weight={600} $color="#374151">{f.name}</Words>
                <Tag $bg={tagColors[f.tag][0]} $color={tagColors[f.tag][1]}>{f.tag}</Tag>
              </Row>
              <Words $size={7} $line={12}>{f.sub}</Words>
              <Words $size={7} $line={10} $color="#4b5563">{f.text}</Words>
              <Words $line={11} $color="#b4b8bf">{f.ago}</Words>
            </Note>
          ))}
        </Box>
      </div>
    </Columns>
    <Caption $x={391} $y={30} $w={252} $h={43} $veil={0.92} $top>Real-time Feedbacks</Caption>
  </Shot>
);

/* ---------- page strip ---------- */

const Strip = styled.ol`
  display: flex;
  align-items: center;
  height: 136px;
  margin-bottom: 36px;
  overflow: hidden;
  list-style: none;
`;

const PageItem = styled.li`
  flex: 0 0 10.75%;
  display: grid;
  grid-template-columns: 34px 1fr;
  align-items: center;
  &:first-child {
    margin-left: 4px;
  }
`;

const AddPage = styled.button<{ $accent?: boolean }>`
  position: relative;
  z-index: 1;
  display: grid;
  place-items: center;
  width: 48px;
  height: 52px;
  margin-left: -7px;
  border-radius: 24px;
  background: #fff;
  box-shadow: 0 4px 16px rgba(64, 72, 90, 0.14);
  color: ${(p) => (p.$accent ? "#8b3dff" : "#0e1318")};
  svg {
    stroke-width: 2;
  }
`;

const Thumb = styled.button<{ $active?: boolean; $fade?: string }>`
  position: relative;
  width: 100%;
  height: ${(p) => (p.$active ? 136 : 128)}px;
  padding: ${(p) => (p.$active ? 4 : 0)}px;
  border: ${(p) => (p.$active ? "4px solid #8b3dff" : "0")};
  border-radius: 16px;
  background: #fff;
  text-align: left;
  opacity: ${(p) => (p.$fade === "all" ? 0.35 : 1)};
  ${(p) =>
    p.$fade === "left" &&
    css`
      -webkit-mask-image: linear-gradient(90deg, rgba(0, 0, 0, 0.25), #000 80%);
      mask-image: linear-gradient(90deg, rgba(0, 0, 0, 0.25), #000 80%);
    `}
  ${(p) =>
    p.$fade === "right" &&
    css`
      -webkit-mask-image: linear-gradient(270deg, rgba(0, 0, 0, 0.4), #000 60%);
      mask-image: linear-gradient(270deg, rgba(0, 0, 0, 0.4), #000 60%);
    `}
`;

const Paper = styled.span<{ $plain?: boolean; $active?: boolean }>`
  position: relative;
  display: block;
  height: 100%;
  padding: ${(p) => (p.$plain ? "0" : p.$active ? "3px 0 0 3px" : "8px 0 0 10px")};
  border: 2px solid #d4d6de;
  border-radius: 14px;
  overflow: hidden;
  background: #fff;
  font: 400 4px/5px ${deck};
  color: #3d4043;
`;

const Edge = styled.span`
  position: absolute;
  left: 0;
  top: 7px;
  width: 5px;
  height: 56px;
  background: #cfe9e6;
`;

const PaperTitle = styled.span`
  position: relative;
  display: block;
  width: 180px;
  font: 700 13px/15px ${deck};
  color: #111;
  white-space: pre-line;
`;

const PaperLogo = styled.span`
  position: absolute;
  top: 3px;
  right: 4px;
  width: 31px;
  opacity: 0.55;
  font: 3px/4px Lato, sans-serif;
  text-align: center;
`;

const PaperFoot = styled.span`
  position: absolute;
  right: 4px;
  bottom: 1px;
  font-size: 3px;
  color: #a996c6;
`;

const Veil = styled.span`
  position: absolute;
  inset: 0;
  background: radial-gradient(circle at 24px 116px, rgba(255, 255, 255, 0.95) 24px, rgba(255, 255, 255, 0) 84px);
`;

const PageNo = styled.span<{ $active?: boolean }>`
  position: absolute;
  left: 14px;
  bottom: 4px;
  display: flex;
  align-items: center;
  gap: 7px;
  font: ${(p) => (p.$active ? 600 : 400)} 24px/32px ${ui};
  color: #0e1318;
`;

const More = styled.span`
  position: absolute;
  top: 16px;
  right: 22px;
  display: grid;
  place-items: center;
  width: 56px;
  height: 32px;
  border-radius: 16px;
  background: rgba(67, 70, 77, 0.8);
`;

const Picture = styled.svg`
  position: absolute;
  inset: 0;
  width: 100%;
  height: 100%;
`;

const Copy = styled.span<{ $x: number; $y: number; $w: number; $center?: boolean; $size?: number; $bold?: boolean; $line?: number; $color?: string }>`
  position: absolute;
  left: ${(p) => p.$x}px;
  top: ${(p) => p.$y}px;
  width: ${(p) => p.$w}px;
  font-size: ${(p) => p.$size ?? 4}px;
  line-height: ${(p) => p.$line ?? 5}px;
  font-weight: ${(p) => (p.$bold ? 700 : 400)};
  color: ${(p) => p.$color ?? "inherit"};
  text-align: ${(p) => (p.$center ? "center" : "left")};
  white-space: pre-line;
`;

const Section = styled.span<{ $top: number }>`
  position: absolute;
  left: 26px;
  right: 26px;
  top: ${(p) => p.$top}px;
  padding: 3px 0;
  border: 2px solid #222;
  background: rgba(255, 255, 255, 0.7);
  font: 700 16px/15px Lato, sans-serif;
  text-align: center;
  color: #111;
  white-space: pre;
`;

const Ghost = styled.span`
  position: absolute;
  left: 5px;
  bottom: -14px;
  font: 700 72px/72px ${deck};
  color: #e0f1ef;
`;

const MiniDash = ({ x, y, s = 1 }: { x: number; y: number; s?: number }) => (
  <g transform={`translate(${x} ${y}) scale(${s})`}>
    <rect width="82" height="38" fill="#f7f9fb" stroke="#bbb" strokeWidth=".7" />
    <rect x="4" y="1.500" width="24" height="18" rx="1" fill="#6b43bb" />
    <path d="M7 5h8M7 9h4M7 14h17" stroke="#b49ade" strokeWidth="1" />
    <circle cx="24" cy="5" r="1.500" fill="#fb7d2b" />
    <rect x="30" y="1.500" width="23" height="18" fill="#fff" />
    <rect x="55" y="1.500" width="23" height="18" fill="#fff" />
    <path d="M32 4h12M57 4h14" stroke="#333" strokeWidth="1" />
    <circle cx="34" cy="8" r="2" fill="#bcd8fd" />
    <circle cx="59" cy="8" r="2" fill="#b5efc9" />
    <path d="M32 13h14" stroke="#2196f3" strokeWidth="1" />
    <rect x="57" y="14" width="3" height="2.500" fill="#4ba6f0" />
    <rect x="61" y="12.500" width="3" height="4" fill="#6fbf73" />
    <rect x="65" y="15.500" width="3" height="1" fill="#fdcb3f" />
    <rect x="4" y="21" width="74" height="15" fill="#fff" />
    {[0, 1, 2, 3, 4, 5].map((k) => (
      <g key={k}>
        <rect x={5 + 12 * k} y="25" width="11" height="10" rx=".8" fill="#ffb04a" />
        <circle cx={10.5 + 12 * k} cy="28" r="2" fill="#fff3c4" />
      </g>
    ))}
  </g>
);

const MiniList = ({ x, y, h }: { x: number; y: number; h: number }) => (
  <g transform={`translate(${x} ${y})`}>
    <rect width="86" height={h} fill="#fbfcfd" stroke="#555" strokeWidth=".8" />
    <path d="M3 3h3" stroke="#43a047" strokeWidth="2" />
    <path d="M9 3h30M62 3h10M4 8h14M6 12h12M60 12h12" stroke="#999" strokeWidth=".8" />
    {[0, 1, 2, 3, 4].map((k) => (
      <g key={k} transform={`translate(0 ${15 + k * 14.5})`}>
        <path d="M6 1h5" stroke={["#5b4bc4", "#a855f7", "#22c55e", "#eab308", "#ef4444"][k]} strokeWidth="1" />
        <path d="M6 3.500h20M6 5.500h32" stroke="#aaa" strokeWidth=".7" />
        <path d="M6 8h44" stroke="#dfe3e8" strokeWidth="1" />
        <path d={`M6 8h${[30, 18, 9, 5, 3][k]}`} stroke="#1e88e5" strokeWidth="1" />
        <path d="M44 11h7" stroke="#1e88e5" strokeWidth="2" />
        <path d="M60 0v10" stroke={k < 3 ? "#4caf50" : "#3b82f6"} strokeWidth=".8" />
        <path d="M62 2h12M62 4.500h16M62 7h10" stroke="#aaa" strokeWidth=".7" />
      </g>
    ))}
  </g>
);

const Chrome = () => (
  <>
    <Edge />
    <PaperLogo>
      <Logo />
      NEXTGEN LABS PTE LTD
    </PaperLogo>
    <PaperFoot>UX Project 1 | Chen Weizhi (8861509V)</PaperFoot>
  </>
);

const Page25 = () => (
  <>
    <Chrome />
    <PaperTitle>How It Solves the Problem</PaperTitle>
    <Copy $x={12} $y={28} $w={60}>Pain Point | User Frustration</Copy>
    <Copy $x={74} $y={28} $w={60} $bold>AceIt! Feature &amp; Solution</Copy>
    <Copy $x={178} $y={28} $w={30} $bold>Mock-ups</Copy>
    <Copy $x={12} $y={41} $w={56}>{"Hard to track multiple\nassignments and deadlines"}</Copy>
    <Copy $x={60} $y={41} $w={118}>{"Centralised Dashboard: All assignments, deadlines and\nprogress in one place. Badges and streaks to motivate."}</Copy>
    <Copy $x={12} $y={59} $w={48}>{"Lack of motivation\nto stay engaged"}</Copy>
    <Copy $x={60} $y={59} $w={118}>{"Gamification: Streaks, badges, and progress tracking to\nencourage daily engagement and reward achievements"}</Copy>
    <Copy $x={12} $y={78} $w={48}>{"Unclear or delayed\nfeedback"}</Copy>
    <Copy $x={60} $y={78} $w={118}>{"Real-Time Feedback Panel: View feedback from lecturers\n+ progress chart"}</Copy>
    <Copy $x={60} $y={97} $w={118}>{"AI Companion: Suggests tasks, auto-search timeframes,\nand answers common student questions."}</Copy>
    <Picture viewBox="0 0 222 124">
      <path d="M10 54h165M10 72h165M10 91h165" stroke="#e3f1ef" strokeWidth=".8" />
      <rect x="178" y="36" width="32" height="17" fill="#eef4fd" stroke="#ddd" strokeWidth=".5" />
      <path d="M181 40h8M196 40h8M181 44h10M196 44h10M186 48h6M202 48h6" stroke="#4b86e8" strokeWidth=".9" />
      <rect x="178" y="55" width="32" height="15" fill="#fff" stroke="#ddd" strokeWidth=".5" />
      {[0, 1, 2].map((k) => (
        <g key={k}>
          <rect x={179 + 10.3 * k} y="59" width="9.500" height="9.500" fill="#ffb04a" />
          <circle cx={184 + 10.3 * k} cy="62.500" r="2" fill="#fff3c4" />
        </g>
      ))}
      <rect x="178" y="72" width="32" height="18" fill="#fff" stroke="#ddd" strokeWidth=".5" />
      <path d="M181 77v11M183 79h18M183 82h22M183 85h16" stroke="#6a9cf0" strokeWidth=".8" />
      <rect x="178" y="92" width="32" height="16" fill="#f4f8fc" stroke="#ddd" strokeWidth=".5" />
      <path d="M180 96h8M180 100h6" stroke="#49b6a8" strokeWidth="1" />
      <path d="M203 99h6" stroke="#2196f3" strokeWidth="3" />
    </Picture>
  </>
);

const Page26 = () => (
  <>
    <Chrome />
    <PaperTitle>{"Unique Aspects vs.\nCompetition"}</PaperTitle>
    <Picture viewBox="0 0 222 124">
      <rect x="18" y="40" width="186" height="10" fill="#cdebea" />
      <path d="M18 50H204M18 59.500H204M18 68.800H204M18 78H204M18 87.500H204M18 97H204M18 106H204M18 115.500H204M18 40V115.500M95 40V115.500M122 40V115.500M149 40V115.500M176 40V115.500M204 40V115.500M18 40H204" stroke="#7fb2b6" strokeWidth=".8" />
      {[
        [1, 1, 0, 0],
        [1, 0, 0, 0],
        [1, 0, 0, 0],
        [1, 0, 0, 0],
        [1, 1, 0, 0],
        [1, 1, 1, 1],
        [1, 1, 0, 0],
      ].map((row, r) =>
        row.map((ok, c) => (
          <g key={`${r}-${c}`} transform={`translate(${108.5 + 27.2 * c} ${54.7 + 9.35 * r})`}>
            <circle r="3.300" fill={ok ? "#2fa84f" : "#e0474c"} />
            <path d={ok ? "M-1.500 0 -.4 1.200 1.600-1.200" : "M-1.200-1.200 1.200 1.200M1.200-1.200-1.200 1.200"} stroke="#fff" strokeWidth=".8" fill="none" />
          </g>
        )),
      )}
    </Picture>
    <Copy $x={18} $y={42} $w={76} $center $bold>Feature / Innovation</Copy>
    <Copy $x={96} $y={42} $w={26} $center $bold>AceIt!</Copy>
    <Copy $x={123} $y={42} $w={26} $center $bold>MyDesk</Copy>
    <Copy $x={150} $y={42} $w={26} $center $bold>Assign.com</Copy>
    <Copy $x={177} $y={42} $w={26} $center $bold>Asana</Copy>
    <Copy $x={18} $y={51} $w={76} $center $line={9}>{"Student-centric Design\nGamification\nBuilt-in AI Study Buddy\nReal-Time Feedback\nLecturer Monitoring UI"}</Copy>
  </>
);

const Page27 = () => (
  <>
    <PaperLogo><Logo /></PaperLogo>
    <Picture viewBox="0 0 208 116">
      <MiniDash x={28} y={37} />
      <rect x="28" y="77" width="82" height="35" fill="#fbfcfd" stroke="#bbb" strokeWidth=".7" />
      <path d="M92 80h4" stroke="#ef4444" />
      <path d="M99 80h7" stroke="#2196f3" strokeWidth="2" />
      <path d="M31 80h22M31 90h40" stroke="#aaa" strokeWidth=".8" />
      <MiniList x={115} y={24} h={88} />
    </Picture>
    <PaperTitle>{"Student Experience\nPreview"}</PaperTitle>
    <Copy $x={32} $y={64} $w={50} $bold>Gamification Features</Copy>
    <Copy $x={82} $y={100} $w={40} $bold>Task Tracking</Copy>
  </>
);

const Page28 = () => (
  <>
    <Picture viewBox="0 0 222 124">
      <path d="M6 72h41v10H20v20c20-4 32 4 32 22H6Z" fill="#e3f2f0" />
    </Picture>
    <Section $top={41}>{"VALIDATION &\nITERATION"}</Section>
    <PaperFoot>UX Project 1 | Chen Weizhi (8861509V)</PaperFoot>
  </>
);

const Page29 = () => (
  <>
    <Chrome />
    <PaperTitle>Agile UX Approach</PaperTitle>
    <Picture viewBox="0 0 222 124">
      <path d="M17 32h16M17 35h40" stroke="#999" strokeWidth="1" />
      <path d="M78 33h14" stroke="#9adbb2" strokeWidth="1.500" />
      <rect x="17" y="37" width="76" height="70" fill="#edf2fb" />
      {["#fdf0b0", "#fbccc5", "#c3d5fa", "#f9d9bd", "#bfedca"].map((c, k) => (
        <g key={c}>
          <rect x={18 + 15 * k} y="46" width="13.500" height="58" fill={c} opacity=".6" />
          <rect x={18 + 15 * k} y="46" width="13.500" height="4" fill={c} />
          {[0, 1, 2, 3].map((j) => (
            <g key={j}>
              <rect x={19 + 15 * k} y={52 + 12 * j} width="11.500" height={8 + ((k + j) % 3)} fill="#fff" stroke={c} strokeWidth=".8" />
              <path d={`M${20.5 + 15 * k} ${54.5 + 12 * j}h7m-7 2.500h5`} stroke="#a9b4c6" strokeWidth=".7" />
            </g>
          ))}
        </g>
      ))}
    </Picture>
    <Copy $x={108} $y={30} $w={112}>{"1. As a relative small team, we have chosen a hybrid\nagile methodology:"}</Copy>
    <Copy $x={115} $y={40} $w={100}>{"a. Combined Sprints + Kanban\nb. Follow best practices of both"}</Copy>
    <Copy $x={108} $y={50} $w={112}>2. Every single module goes through its own iteration</Copy>
    <Copy $x={115} $y={55} $w={100}>{"a. User Research (surveys & interviews)\nb. Design\nc. Development\nd. User Testing\ne. Iterate where necessary"}</Copy>
    <Copy $x={108} $y={81} $w={112}>{"3. We run our Sprints on a bi-weekly basis.\n4. Our CEO has been assigned as the Product\nManager for AceIt! to help monitor the progress\nand facilitate weekly stand-up meetings."}</Copy>
  </>
);

const Page30 = () => (
  <>
    <Chrome />
    <Picture viewBox="0 0 222 124">
      <rect x="12" y="29" width="33" height="33" fill="#fafafa" stroke="#888" strokeWidth=".6" />
      <path d="m28 48 5 4-2 6h-6l-2-6Z" fill="#8b96d8" />
      <path d="M15 38h6M25 38h6M35 38h6" stroke="#888" />
      <rect x="47" y="29" width="33" height="33" fill="#fafafa" stroke="#888" strokeWidth=".6" />
      <path d="M70 35h8M70 39h8M68 43h10M70 47h8M68 51h10M70 55h8" stroke="#c9386a" strokeWidth="1.200" />
      <rect x="18" y="66" width="58" height="28" fill="#dcdfe3" />
      <rect x="34" y="66" width="28" height="28" fill="#fff" />
      <path d="M37 86v-5M40 86v-3M43 86v-6M46 86v-4M50 86v-5M54 86v-7M58 86v-4" stroke="#4b86c8" strokeWidth="1.200" />
      <path d="M91 96c0-40 36-40 36-6" fill="none" stroke="#d9ccf0" strokeWidth="7" />
      <path d="M83 88h16l-8 10Z" fill="#a98fdc" />
      <rect x="83" y="33" width="47" height="53" fill="#fff" stroke="#5e4a8c" strokeWidth=".8" />
      <MiniDash x={134} y={21} s={0.55} />
      <path d="M138 50h18M162 50h16M138 56h18M162 56h16M138 62h18M162 62h16" stroke="#7db2ee" strokeWidth="1.200" />
      <path d="M138 76h40" stroke="#777" strokeWidth="5" />
      <path d="M184 26h16M184 32h20M184 38h20M184 44h20M184 50h20M184 56h20M184 62h20M184 68h20M184 74h20" stroke="#9cc4ee" strokeWidth="1.200" />
      <path d="M34 97h50l4 6-4 6H34l4-6Z" fill="#a6bd8f" />
      <path d="M85 97h50l4 6-4 6H85l4-6Z" fill="#43a047" />
      <path d="M136 97h48l5 6-5 6h-48l4-6Z" fill="#a9d5d2" />
    </Picture>
    <PaperTitle>User Testing Plan</PaperTitle>
    <Copy $x={86} $y={36} $w={44}>{"• Introduce UI & UX\n• Two scenarios:\nassignment & group\nproject\n• Observe the users\non-screen\n• Post-interviews\n• Survey for users'\nresponse"}</Copy>
    <Copy $x={97} $y={100} $w={30} $center $color="#fff">User Testing</Copy>
    <Copy $x={146} $y={100} $w={34} $center>Final Design</Copy>
  </>
);

const Page31 = () => (
  <>
    <Chrome />
    <PaperTitle>Key Insights &amp; Outcomes</PaperTitle>
    <Picture viewBox="0 0 222 124">
      <path d="M110 27v84" stroke="#c5e4e1" strokeWidth="1.500" />
    </Picture>
    <Copy $x={14} $y={27} $w={82} $center $bold $size={6} $line={7}>{"Key Insights from User\nTesting"}</Copy>
    <Copy $x={122} $y={27} $w={82} $center $bold $size={6} $line={7}>{"Tangible Outcomes &\nImprovements"}</Copy>
    <Copy $x={10} $y={45} $w={92} $center>{"Students wanted clearer, more motivating\ndashboards\n\nAssignment deadlines needed to be more\nvisible at a glance.\n\nUsers struggled to break large projects into\nmanageable steps.\n\nUsers found the idea of gamification and\nbadges engaging."}</Copy>
    <Copy $x={117} $y={45} $w={92} $center>{"~40% increase in task completion (after\nadding streaks & badges)\n\nDashboard redesign with tabs, colours and\nprogress front-and-center\n\nAce AI companion introduced for smarter\nstudy planning\n\nUser satisfaction: 85% rated AceIt! as\n“easier” and “more motivating” than old\nLMS"}</Copy>
  </>
);

const Page32 = () => (
  <>
    <Ghost>6</Ghost>
    <Section $top={35}>{"IMPLEMENTATION,\nROLLOUT &\nMARKETING"}</Section>
    <PaperFoot>UX Project 1 | Chen Weizhi (8861509V)</PaperFoot>
  </>
);

const Page33 = () => (
  <>
    <Chrome />
    <Picture viewBox="0 0 222 124">
      <rect x="74" y="33" width="78" height="24" fill="#fff" stroke="#7c6bb8" strokeWidth=".8" />
      <path d="M77 35h3" stroke="#43a047" strokeWidth="2" />
      <MiniDash x={72} y={37} s={0.98} />
      <rect x="12" y="98" width="52" height="9" fill="#fbd9ac" opacity=".7" />
      {[0, 1, 2].map((r) =>
        [0, 1].map((c) => (
          <g key={`${r}-${c}`} transform={`translate(${77 + 37 * c} ${80 + 12 * r})`}>
            <path d="M0 0h14" stroke="#888" strokeWidth=".8" />
            <path d="M0 5h32" stroke="#dfe3e8" />
            <path d="M0 5h16M26 9h6" stroke="#1e88e5" strokeWidth="1.200" />
          </g>
        )),
      )}
      <path d="M36 46h18l20 4M54 46l24 46M152 34h12M152 48l12 6-12 10 12 22M152 54l12 32-18 1" fill="none" stroke="#222" strokeWidth=".6" />
    </Picture>
    <PaperTitle>{"Gestalt Principles in\nAceIt!"}</PaperTitle>
    <Copy $x={26} $y={43} $w={34} $bold>Law Similarity</Copy>
    <Copy $x={11} $y={49} $w={48} $center>{"Elements share colour\nand shape so items\nread as one group"}</Copy>
    <Copy $x={12} $y={76} $w={52} $bold>{"Continuation (Alignment\nDirection)"}</Copy>
    <Copy $x={12} $y={87} $w={56}>{"Progress bars line up\nneatly to guide the eye"}</Copy>
    <Copy $x={165} $y={32} $w={52}>{"Law of Common Region\nThe menu is in its box\nand set apart"}</Copy>
    <Copy $x={165} $y={52} $w={52}>{"Proximity Law\nRelated content is\ngrouped by region and\ncards sit together"}</Copy>
    <Copy $x={165} $y={84} $w={52}>{"Closure / Isolation\nDifferent colours for\neach status show\nclear progress"}</Copy>
  </>
);

const pages = [
  { no: 25, Art: Page25, fade: "left" },
  { no: 26, Art: Page26 },
  { no: 27, Art: Page27 },
  { no: 28, Art: Page28, plain: true },
  { no: 29, Art: Page29 },
  { no: 30, Art: Page30 },
  { no: 31, Art: Page31 },
  { no: 32, Art: Page32, plain: true },
  { no: 33, Art: Page33, fade: "right" },
  { no: 34, Art: Page33, fade: "all" },
];

/* ---------- footer ---------- */

const BottomBar = styled.footer`
  display: flex;
  align-items: center;
  height: 64px;
  padding: 0 24px 0 26px;
  font: 400 29px/40px ${ui};
`;

const FootButton = styled.button`
  display: flex;
  align-items: center;
  gap: 7px;
  margin-right: 39px;
`;

const Zoom = styled.input`
  appearance: none;
  width: 400px;
  height: 40px;
  margin: 0 0 0 auto;
  background: none;
  &::-webkit-slider-runnable-track {
    height: 8px;
    border-radius: 4px;
    background: radial-gradient(circle at 4px 4px, #69717c 2px, transparent 3px),
      radial-gradient(circle at 396px 4px, #69717c 2px, transparent 3px),
      linear-gradient(90deg, #b1b8c2 var(--fill), #d4d7de var(--fill));
  }
  &::-webkit-slider-thumb {
    appearance: none;
    width: 38px;
    height: 38px;
    margin-top: -15px;
    border-radius: 50%;
    background: #fff;
    box-shadow: 0 0 0 1px #cfd3da, 0 2px 5px rgba(64, 72, 90, 0.3);
  }
`;

const ZoomValue = styled.output`
  width: 60px;
  margin: 0 50px;
  text-align: center;
`;

const PagesButton = styled.button`
  display: flex;
  align-items: center;
  gap: 8px;
  height: 64px;
  margin: 0 34px 0 16px;
  padding: 0 15px 0 8px;
  border-radius: 16px;
  background: #d3d6dd;
  font: 400 28px/40px ${ui};
`;

const FootRule = styled.span`
  width: 4px;
  height: 32px;
  border-radius: 2px;
  background: #d3d6dd;
`;

const FootIcons = styled.div`
  display: flex;
  gap: 32px;
  margin-left: 41px;
`;

const HomeBar = styled.div`
  display: flex;
  justify-content: center;
  padding: 17px 0 14px;
  &::after {
    content: "";
    width: 860px;
    height: 9px;
    border-radius: 5px;
    background: #646466;
  }
`;

const sideItems: { name: IconName; label: string }[] = [
  { name: "design", label: "Design" },
  { name: "elements", label: "Elements" },
  { name: "text", label: "Text" },
  { name: "camera", label: "Gallery" },
  { name: "brand", label: "Brand" },
  { name: "upload", label: "Uploads" },
  { name: "tools", label: "Tools" },
  { name: "folder", label: "Projects" },
];

export default function App() {
  const [zoom, setZoom] = useState(39);
  return (
    <>
      <GlobalStyle />
      <Header>
        <StatusBar>
          <StatusGroup $gap={20}>
            <span>7:09</span>
            <span>Thu, Jul 3</span>
            <MdCloud size={25} />
            <Dots $size={4} $gap={5}><i /></Dots>
          </StatusGroup>
          <Dots $size={8} $gap={8} $color="rgba(255,255,255,.6)"><i /></Dots>
          <StatusGroup $gap={5} $end>
            <MdBluetoothConnected size={34} />
            <MdOutlineNotificationsOff size={34} />
            <MdWifi size={36} />
            <Battery>54</Battery>
            <MdBolt size={24} />
          </StatusGroup>
        </StatusBar>
        <Toolbar aria-label="Document">
          <MenuButton aria-label="Menu"><Icon name="menu" /></MenuButton>
          <NavButton>File</NavButton>
          <NavButton>
            <Faded $opacity={0.7}><Icon name="crown" size={24} /></Faded>
            Resize
          </NavButton>
          <NavButton $gap={16}>
            <Icon name="pencil" />
            Editing
            <Icon name="chevron" size={32} />
          </NavButton>
          <Rule />
          <History>
            <button aria-label="Undo"><Icon name="undo" /></button>
            <button aria-label="Redo"><Icon name="redo" /></button>
          </History>
          <Rule />
          <button aria-label="All changes saved"><Icon name="cloudCheck" /></button>
          <DocTitle>UX Project 1 (Chen Weizhi, 8861509V)</DocTitle>
          <Actions>
            <People>
              <Avatar>W</Avatar>
              <OutlineButton $round aria-label="Add people"><Icon name="plus" size={34} /></OutlineButton>
            </People>
            <OutlineButton aria-label="Insights"><Icon name="chart" /></OutlineButton>
            <OutlineButton aria-label="Comment"><Icon name="comment" /></OutlineButton>
            <OutlineButton $wide>
              <Icon name="present" />
              Present
            </OutlineButton>
            <ShareButton>
              <Icon name="share" />
              Share
            </ShareButton>
          </Actions>
        </Toolbar>
      </Header>

      <Body>
        <Sidebar>
          {sideItems.map((s) => (
            <SideButton key={s.label}>
              <Icon name={s.name} />
              {s.label === "Brand" && <ProMark><Icon name="crown" size={24} /></ProMark>}
              {s.label}
            </SideButton>
          ))}
          <SideButton $fade aria-label="Apps"><Icon name="apps" /></SideButton>
          <MagicButton aria-label="Magic assistant">
            <svg width="44" height="44" viewBox="0 0 44 44" aria-hidden="true">
              <defs>
                <linearGradient id="spark" x1="0" y1="0" x2="1" y2="1">
                  <stop offset="0" stopColor="#0aa5b5" />
                  <stop offset=".6" stopColor="#5a5be0" />
                  <stop offset="1" stopColor="#7d2ae8" />
                </linearGradient>
              </defs>
              <path
                fill="url(#spark)"
                d="M24 7c2.500 10 5 12.500 15 16-10 3.500-12.500 6-15 16-2.500-10-5-12.500-15-16 10-3.500 12.500-6 15-16ZM10 2c1.500 4.500 3 6 7.500 7.500C13 11 11.500 12.500 10 17 8.500 12.500 7 11 2.500 9.500 7 8 8.500 6.500 10 2ZM38 4c.9 3 2 4 5 5-3 1-4 2-5 5-1-3-2-4-5-5 3-1 4-2 5-5ZM9 31c.9 3 2 4 5 5-3 1-4 2-5 5-1-3-2-4-5-5 3-1 4-2 5-5Z"
              />
            </svg>
          </MagicButton>
        </Sidebar>

        <Main>
          <ContextBar role="toolbar">
            <ColorWheel aria-label="Background colour" />
            <ContextRule />
            <ContextButton><Icon name="animate" />Animate</ContextButton>
            <ContextRule />
            <ContextButton><Icon name="clock" />5.0s</ContextButton>
            <ContextRule />
            <ContextButton>Position</ContextButton>
          </ContextBar>

          <Stage>
            <Slide>
              <Accent />
              <SlideTitle>Student Experience Preview</SlideTitle>
              <SlideLogo>
                <Logo />
                NEXTGEN LABS PTE LTD
              </SlideLogo>
              <GamificationShot />
              <TaskShot />
              <AssignmentsShot />
              <SlideFooter>UX Project 1 | Chen Weizhi (8861509V)</SlideFooter>
            </Slide>
          </Stage>

          <Strip>
            {pages.map(({ no, Art, plain, fade }) => {
              const active = no === 27;
              return (
                <PageItem key={no}>
                  <AddPage aria-label={`Add page before ${no}`} $accent={no === 28}><Icon name="plus" size={36} /></AddPage>
                  <Thumb $active={active} $fade={fade} aria-label={`Page ${no}`}>
                    <Paper $plain={plain} $active={active}>
                      <Art />
                      <Veil />
                      <PageNo $active={active}>
                        <Icon name="present" size={34} />
                        {no}
                      </PageNo>
                    </Paper>
                    {active && <More><Dots $size={5} $gap={5}><i /></Dots></More>}
                  </Thumb>
                </PageItem>
              );
            })}
          </Strip>

          <BottomBar>
            <FootButton><Icon name="notes" />Notes</FootButton>
            <FootButton><Icon name="duration" />Duration</FootButton>
            <FootButton><Icon name="timer" />Timer</FootButton>
            <Zoom
              type="range"
              aria-label="Zoom"
              value={zoom}
              onChange={(e) => setZoom(Number(e.target.value))}
              style={{ "--fill": `${zoom}%` } as React.CSSProperties}
            />
            <ZoomValue>45%</ZoomValue>
            <FootRule />
            <PagesButton><Icon name="pages" />Pages</PagesButton>
            <span>27 / 44</span>
            <FootIcons>
              <button aria-label="Grid view"><Icon name="grid" /></button>
              <button aria-label="Full screen"><Icon name="expand" /></button>
              <button aria-label="Help"><Icon name="help" /></button>
            </FootIcons>
          </BottomBar>
        </Main>
      </Body>
      <HomeBar />
    </>
  );
}
